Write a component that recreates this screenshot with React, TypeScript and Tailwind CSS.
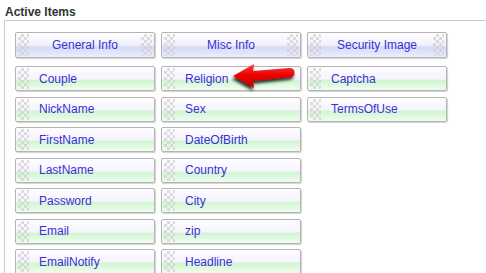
import React from "react";

const itemBg =
  "bg-[linear-gradient(to_bottom,#fefdff_0%,#f6f4fd_52%,#d0f6d0_58%,#e4fae4_85%,#f2fcf2_100%)]";
const headBg =
  "bg-[linear-gradient(to_bottom,#fefdff_0%,#f2f1fb_50%,#d6daf7_58%,#e2e5fa_85%,#eef0fc_100%)]";

function Grip() {
  return (
    <div className="w-[11px] self-stretch my-[1px] bg-[repeating-conic-gradient(#cfcfcf_0%_25%,transparent_0%_50%)] bg-[length:6px_6px] opacity-70" />
  );
}

function Header({ label }: { label: string }) {
  return (
    <div
      className={`h-[26px] w-[140px] flex items-stretch px-[2px] border border-[#b4b4b4] rounded-[2px] shadow-[1px_1px_1px_rgba(0,0,0,0.18)] ${headBg}`}
    >
      <Grip />
      <div className="flex-1 flex items-center justify-center text-[12px] text-[#3b2fd8]">
        {label}
      </div>
      <Grip />
    </div>
  );
}

function Item({ label }: { label: string }) {
  return (
    <div
      className={`h-[25px] w-[140px] flex items-stretch px-[2px] border border-[#b4b4b4] rounded-[2px] shadow-[1px_1px_1px_rgba(0,0,0,0.18)] ${itemBg}`}
    >
      <Grip />
      <div className="flex-1 flex items-center pl-[10px] text-[12px] text-[#3b2fd8]">
        {label}
      </div>
    </div>
  );
}

function Column({ head, items }: { head: string; items: string[] }) {
  return (
    <div className="flex flex-col">
      <Header label={head} />
      <div className="flex flex-col gap-[5.5px] mt-[8px]">
        {items.map((i) => (
          <Item key={i} label={i} />
        ))}
      </div>
    </div>
  );
}

export default function App() {
  return (
    <div
      className="w-[486px] h-[273px] overflow-hidden bg-white relative"
      style={{ fontFamily: '"Liberation Sans", Arial, sans-serif' }}
    >
      <div className="pl-[5px] pt-[5px] h-[20px] text-[12px] font-bold text-[#333] leading-[14px]">
        Active Items
      </div>
      <div className="ml-[4px] w-[520px] h-[300px] border-l border-t border-[#cccccc] pl-[10px] pt-[11px]">
        <div className="flex gap-[6px] items-start">
          <Column
            head="General Info"
            items={["Couple", "NickName", "FirstName", "LastName", "Password", "Email", "EmailNotify"]}
          />
          <Column
            head="Misc Info"
            items={["Religion", "Sex", "DateOfBirth", "Country", "City", "zip", "Headline"]}
          />
          <Column head="Security Image" items={["Captcha", "TermsOfUse"]} />
        </div>
      </div>
      <svg
        className="absolute left-[228px] top-[58px]"
        width="74"
        height="36"
        viewBox="0 0 74 36"
      >
        <defs>
          <linearGradient id="rg" x1="0" y1="0" x2="0" y2="1">
            <stop offset="0" stopColor="#ff4040" />
            <stop offset="0.45" stopColor="#ee0000" />
            <stop offset="1" stopColor="#c00000" />
          </linearGradient>
          <filter id="sh" x="-20%" y="-30%" width="140%" height="170%">
            <feGaussianBlur in="SourceAlpha" stdDeviation="1.6" />
            <feOffset dx="-1" dy="3" result="o" />
            <feComponentTransfer>
              <feFuncA type="linear" slope="0.8" />
            </feComponentTransfer>
            <feMerge>
              <feMergeNode />
              <feMergeNode in="SourceGraphic" />
            </feMerge>
          </filter>
        </defs>
        <g filter="url(#sh)">
          <path
            d="M5 18 L26 6 L25 13 L61 10 Q66 9.6 66.5 14 Q67 18.5 62 19 L25 23 L26 30 Z"
            fill="url(#rg)"
          />
        </g>
      </svg>
    </div>
  );
}
